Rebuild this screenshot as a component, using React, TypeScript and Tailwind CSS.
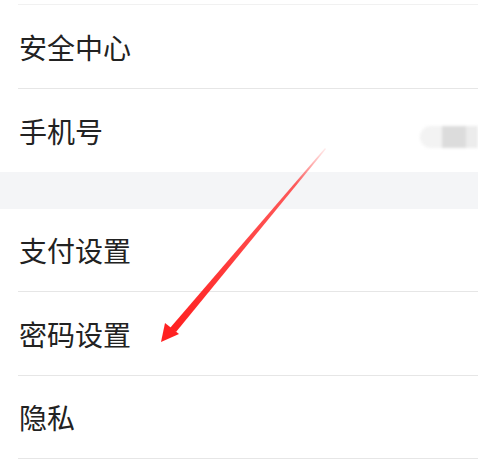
import React from "react";

const Row: React.FC<{ label: string; h: string; border?: boolean; children?: React.ReactNode }> = ({
  label,
  h,
  border = true,
  children,
}) => (
  <div className={`${h} flex items-center justify-between ${border ? "border-b border-[#e6e6e6]" : ""}`}>
    <span className="text-[28px] text-[#222] leading-none pl-[1px]">{label}</span>
    {children}
  </div>
);

const App: React.FC = () => {
  return (
    <div
      className="relative w-[478px] h-[464px] bg-white overflow-hidden"
      style={{ fontFamily: '"Noto Sans CJK SC", "Noto Sans", sans-serif' }}
    >
      <div className="h-[5px] ml-[18px] border-b border-[#f1f1f1]" />
      <div className="ml-[18px]">
        <Row label="安全中心" h="h-[84px]" />
        <Row label="手机号" h="h-[83px]" border={false}>
          <div className="flex items-center h-[22px] mt-[12px] blur-[1.5px]">
            <div className="w-[22px] h-[22px] rounded-l-full bg-[#f3f3f3]" />
            <div className="w-[24px] h-[22px] bg-[#dcdcdc]" />
            <div className="w-[12px] h-[22px] bg-[#ececec]" />
          </div>
        </Row>
      </div>
      <div className="h-[37px] bg-[#f4f5f7]" />
      <div className="ml-[18px]">
        <Row label="支付设置" h="h-[83px]" />
        <Row label="密码设置" h="h-[84px]" />
        <Row label="隐私" h="h-[83px]" />
      </div>

      <svg
        className="absolute left-0 top-0 pointer-events-none"
        width="478"
        height="464"
        viewBox="0 0 478 464"
      >
        <defs>
          <linearGradient id="fade" x1="325" y1="148" x2="175" y2="325" gradientUnits="userSpaceOnUse">
            <stop offset="0" stopColor="#f44" stopOpacity="0.1" />
            <stop offset="0.2" stopColor="#f33" stopOpacity="0.8" />
            <stop offset="1" stopColor="#f22" stopOpacity="1" />
          </linearGradient>
        </defs>
        <polygon points="325,148 326,149 176,332 170,328" fill="url(#fade)" />
        <polygon points="161,342 165,323 179,334" fill="#f22" />
      </svg>
    </div>
  );
};

export default App;
